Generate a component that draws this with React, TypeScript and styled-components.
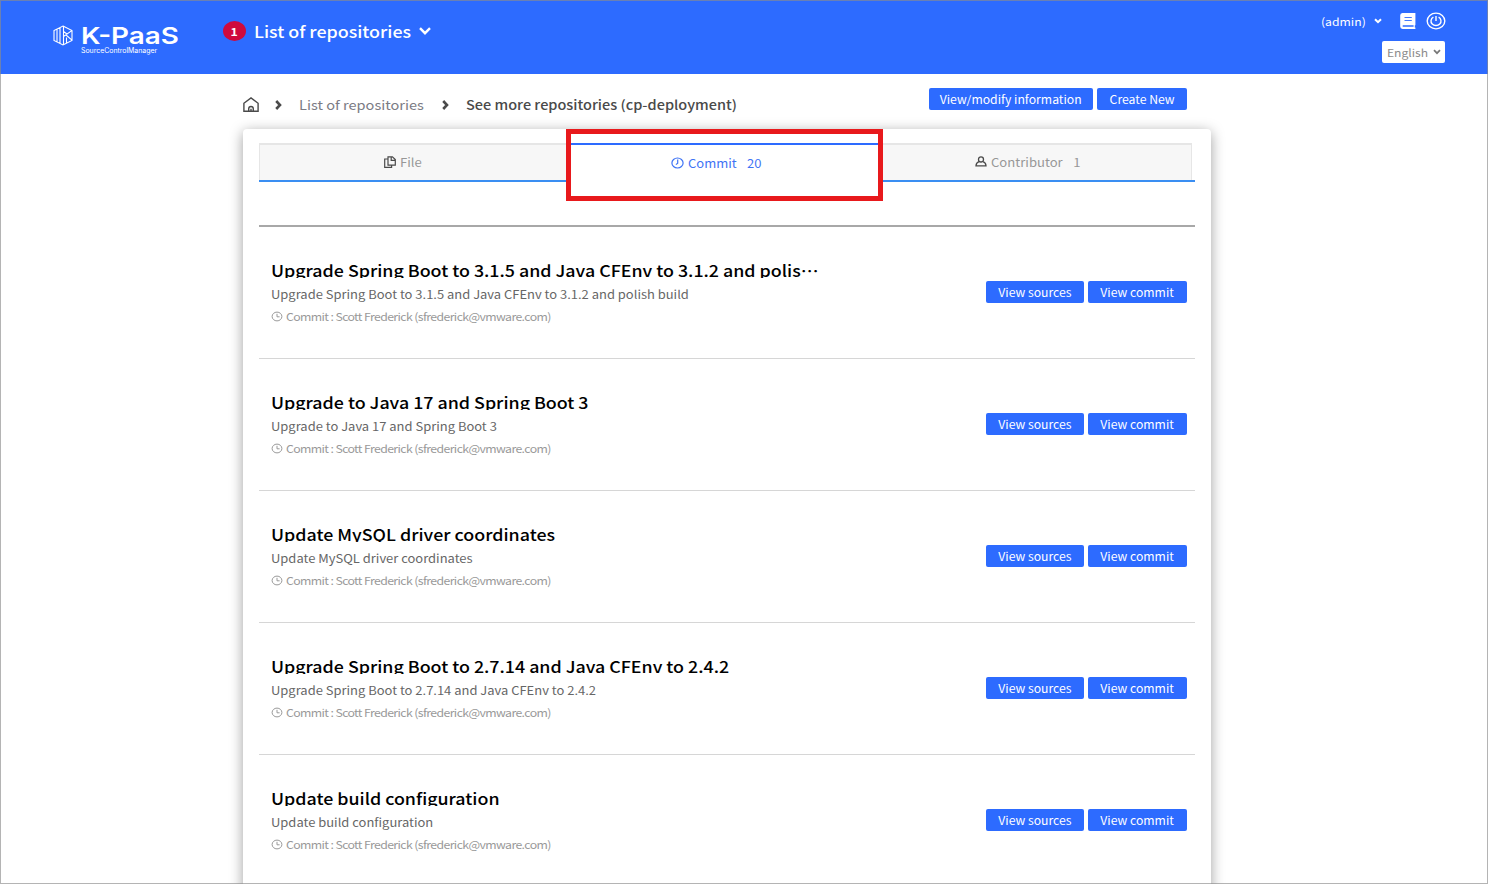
import React from 'react';
import styled, { createGlobalStyle } from 'styled-components';

const Global = createGlobalStyle`
  * { box-sizing: border-box; }
  html, body { margin: 0; padding: 0; }
  body {
    background: #fff;
    font-family: "Noto Sans CJK KR", "Noto Sans", sans-serif;
    overflow: hidden;
  }
  svg { display: block; flex: none; }
`;

const Page = styled.div`
  position: relative;
  width: 1488px;
  height: 884px;
  overflow: hidden;
  background: #fff;
  &::after {
    content: '';
    position: absolute;
    inset: 0;
    border: 1px solid rgba(140, 140, 140, 0.65);
    pointer-events: none;
  }
`;

const Wide = styled.span<{ $k?: number; $center?: boolean; $ls?: number; $ws?: number }>`
  display: inline-block;
  white-space: pre;
  letter-spacing: ${p => p.$ls ?? 0}px;
  word-spacing: ${p => p.$ws ?? 0}px;
  transform: scaleX(${p => p.$k ?? 1.12});
  transform-origin: ${p => (p.$center ? 'center' : 'left')} center;
`;

const Header = styled.header`
  display: flex;
  height: 74px;
  background: #2d6bff;
  color: #fff;
`;

const Logo = styled.div`
  display: flex;
  width: 170px;
  margin-left: 53px;
  padding-top: 25px;
  gap: 8px;
`;

const LogoText = styled.div`
  display: flex;
  flex-direction: column;
  align-items: flex-start;
`;

const Brand = styled.div`
  font: 600 23px/22px Inter, sans-serif;
`;

const Product = styled.div`
  font: 400 7px/7px Inter, sans-serif;
`;

const Nav = styled.nav`
  display: flex;
  align-items: center;
  height: 24px;
  margin-top: 19px;
  width: 240px;
`;

const Badge = styled.span`
  display: flex;
  align-items: center;
  justify-content: center;
  width: 23px;
  height: 20px;
  margin-right: 8px;
  border-radius: 50%;
  background: #cf0a3c;
  font: 700 11px/18px "Noto Sans CJK KR", sans-serif;
`;

const NavLabel = styled.span`
  width: 165px;
  font-size: 16px;
  line-height: 22px;
  font-weight: 500;
`;

const Tools = styled.div`
  display: flex;
  flex-direction: column;
  align-items: flex-end;
  margin-left: auto;
  padding: 12px 42px 0 0;
`;

const UserRow = styled.div`
  display: flex;
  align-items: center;
  height: 18px;
  font-size: 10.9px;
  line-height: 18px;
`;

const UserName = styled.span`
  width: 53px;
  margin-top: -1px;
`;

const UserIcons = styled.div`
  display: flex;
  align-items: center;
  gap: 10px;
  margin-left: 18px;
`;

const Language = styled.div`
  display: flex;
  align-items: center;
  justify-content: space-between;
  width: 63px;
  height: 22px;
  margin: 11px 1px 0 0;
  padding: 0 4px 1px 5px;
  border-radius: 2px;
  background: #fff;
  color: #8c8c8c;
  font-size: 10.8px;
  line-height: 20px;
`;

const TopBar = styled.div`
  display: flex;
  justify-content: space-between;
  width: 944px;
  height: 55px;
  margin-left: 243px;
`;

const Crumbs = styled.div`
  display: flex;
  align-items: center;
  height: 20px;
  margin-top: 21px;
  font-size: 13px;
  line-height: 20px;
`;

const Crumb = styled.span<{ $w: number; $current?: boolean }>`
  width: ${p => p.$w}px;
  font-weight: ${p => (p.$current ? 500 : 400)};
  color: ${p => (p.$current ? '#4a4a4a' : '#7b7b84')};
`;

const Buttons = styled.div`
  display: flex;
  gap: 4px;
`;

const TopButtons = styled(Buttons)`
  margin-top: 14px;
`;

const Button = styled.button<{ $w: number }>`
  display: flex;
  align-items: center;
  justify-content: center;
  width: ${p => p.$w}px;
  height: 22px;
  padding: 0 0 1px;
  border: 0;
  border-radius: 2px;
  background: #2d6bff;
  color: #fff;
  font: 400 11.3px/20px "Noto Sans CJK KR", sans-serif;
`;

const Card = styled.main`
  width: 968px;
  height: 900px;
  margin-left: 243px;
  padding: 14px 16px 0;
  border-radius: 4px 4px 0 0;
  background: #fff;
  box-shadow: 0 3px 14px rgba(0, 0, 0, 0.38);
`;

const Tabs = styled.div`
  display: flex;
  position: relative;
  height: 39px;
  padding-right: 3px;
  border-bottom: 2px solid #3a8ef2;
`;

const Tab = styled.div<{ $active?: boolean }>`
  display: flex;
  flex: 1;
  align-items: center;
  justify-content: center;
  height: ${p => (p.$active ? 42 : 37)}px;
  padding-bottom: ${p => (p.$active ? 5 : 2)}px;
  border: solid ${p => (p.$active ? '#2d6bff' : '#e6e6e6')};
  border-width: 2px 0 0;
  background: ${p => (p.$active ? '#fff' : '#f7f7f7')};
  color: ${p => (p.$active ? '#3f74f5' : '#979797')};
  font-size: 11.7px;
  line-height: 20px;
  &:first-child { border-left-width: 1px; }
  &:nth-child(3) { border-right-width: 1px; }
`;

const TabLabel = styled.span<{ $w: number }>`
  width: ${p => p.$w}px;
  margin-left: 4px;
`;

const Highlight = styled.div`
  position: absolute;
  left: 307px;
  top: -14px;
  width: 317px;
  height: 72px;
  border: 5px solid #e8191c;
`;

const List = styled.ul`
  margin: 43px 0 0;
  padding: 0;
  list-style: none;
  border-top: 2px solid #a8a8a8;
`;

const Item = styled.li`
  display: flex;
  justify-content: space-between;
  height: 132px;
  padding: 35px 8px 0 12px;
  border-bottom: 1px solid #d6d6d6;
`;

const Title = styled.h3`
  height: 16px;
  margin: 0;
  overflow: hidden;
  width: 600px;
  color: #000;
  font-size: 16px;
  line-height: 16px;
  font-weight: 500;
`;

const Ellipsis = styled.span`
  font-family: "Noto Sans CJK JP", sans-serif;
`;

const Description = styled.p`
  margin: 6px 0 0;
  color: #666;
  font-size: 11.6px;
  line-height: 20px;
`;

const Meta = styled.div`
  display: flex;
  align-items: center;
  gap: 3px;
  margin-top: 2px;
  color: #999;
  font-size: 11px;
  line-height: 20px;
`;

const ItemButtons = styled(Buttons)`
  margin-top: 19px;
`;

const Chevron = ({ w, h, sw, dir = 'down', color = 'currentColor' }: { w: number; h: number; sw: number; dir?: string; color?: string }) => (
  <svg width={w} height={h} viewBox={`0 0 ${w} ${h}`} fill="none" stroke={color} strokeWidth={sw}>
    {dir === 'down'
      ? <path d={`M1 1.2 L${w / 2} ${h - 1.8} L${w - 1} 1.2`} />
      : <path d={`M1.2 1 L${w - 2} ${h / 2} L1.2 ${h - 1}`} />}
  </svg>
);

const LogoMark = () => (
  <svg width="20" height="21" viewBox="0 0 20 21" fill="none" stroke="#fff" strokeWidth="1.1">
    <path d="M10 1 19 5.5V15.5L10 20 1 15.5V5.5ZM4 4.2V16.8M7 2.8V18.2M10.5 1V20M10.5 11.5 18.8 5.6M13 10 19 15.2M10.5 6.5 14 9M13.5 12.5V18" />
  </svg>
);

const HomeIcon = () => (
  <svg width="16" height="16" viewBox="0 0 16 16" fill="none" stroke="#4a4a4a" strokeWidth="1.4">
    <path d="M.9 6.3 8 .9l7.1 5.4v8H.9ZM5.7 14.2v-2.4a2.3 2.3 0 0 1 4.6 0v2.4M8 11.8v2.4" />
  </svg>
);

const BookIcon = () => (
  <svg width="16" height="16" viewBox="0 0 16 16">
    <path d="M2.4 0H15.4V12.3H14.8V14.6H15.4V16H2.6A2.4 2.4 0 0 1 .2 13.6V2.4A2.3 2.3 0 0 1 2.4 0Z" fill="#fff" />
    <path d="M4.5 4.5H11.8M4.5 7.5H11.8" stroke="#2d6bff" strokeWidth=".9" />
    <path d="M2.7 13H13.6" stroke="#2d6bff" strokeWidth="1.5" />
  </svg>
);

const PowerIcon = () => (
  <svg width="20" height="18" viewBox="0 0 20 18" fill="none" stroke="#fff" strokeWidth="1.4">
    <ellipse cx="10" cy="9" rx="8.8" ry="7.9" />
    <path d="M7.4 5.2A5 4.5 0 1 0 12.6 5.2M10 4V9" />
  </svg>
);

const FileIcon = () => (
  <svg width="12" height="12" viewBox="0 0 12 12" fill="none" stroke="#4a4a4a" strokeWidth="1.2">
    <path d="M4 3H.7V11.3H7.6V9.2M4 .8H8.4L11.3 3.5V9.2H4ZM7.2 1V4.4H11.2" />
  </svg>
);

const CommitIcon = () => (
  <svg width="13" height="12" viewBox="0 0 13 12" fill="none" stroke="#3f74f5" strokeWidth="1.2">
    <ellipse cx="6.5" cy="6" rx="5.6" ry="5" />
    <path d="M6.7 2.4V6.2L4.9 7.6" />
  </svg>
);

const PersonIcon = () => (
  <svg width="12" height="11" viewBox="0 0 12 11" fill="none" stroke="#4a4a4a" strokeWidth="1.3">
    <ellipse cx="6" cy="3.4" rx="2.5" ry="2.6" />
    <path d="M4 5.7Q1.2 6.7 1 9.8H11Q10.8 6.7 8 5.7" />
  </svg>
);

const ClockIcon = () => (
  <svg width="12" height="11" viewBox="0 0 12 11" fill="none" stroke="#999" strokeWidth="1">
    <ellipse cx="6" cy="5.5" rx="4.9" ry="4.4" />
    <path d="M6 2.8V5.8H8.6" />
  </svg>
);

const commits = [
  { title: 'Upgrade Spring Boot to 3.1.5 and Java CFEnv to 3.1.2 and polis', cut: true, text: 'Upgrade Spring Boot to 3.1.5 and Java CFEnv to 3.1.2 and polish build' },
  { title: 'Upgrade to Java 17 and Spring Boot 3', text: 'Upgrade to Java 17 and Spring Boot 3' },
  { title: 'Update MySQL driver coordinates', text: 'Update MySQL driver coordinates' },
  { title: 'Upgrade Spring Boot to 2.7.14 and Java CFEnv to 2.4.2', text: 'Upgrade Spring Boot to 2.7.14 and Java CFEnv to 2.4.2' },
  { title: 'Update build configuration', text: 'Update build configuration' },
];

export default function App() {
  return (
    <Page>
      <Global />
      <Header>
        <Logo>
          <LogoMark />
          <LogoText>
            <Brand><Wide $k={1.21}>K-PaaS</Wide></Brand>
            <Product><Wide $k={0.99}>SourceControlManager</Wide></Product>
          </LogoText>
        </Logo>
        <Nav>
          <Badge><Wide $center>1</Wide></Badge>
          <NavLabel><Wide $k={1.113}>List of repositories</Wide></NavLabel>
          <Chevron w={12} h={8} sw={2.4} />
        </Nav>
        <Tools>
          <UserRow>
            <UserName><Wide>(admin)</Wide></UserName>
            <Chevron w={8} h={6} sw={2} />
            <UserIcons>
              <BookIcon />
              <PowerIcon />
            </UserIcons>
          </UserRow>
          <Language>
            <Wide>English</Wide>
            <Chevron w={8} h={6} sw={1.7} color="#777" />
          </Language>
        </Tools>
      </Header>
      <TopBar>
        <Crumbs>
          <Crumb $w={32}><HomeIcon /></Crumb>
          <Crumb $w={24}><Chevron w={7} h={10} sw={2.6} dir="right" color="#4a4a4a" /></Crumb>
          <Crumb $w={143}><Wide>List of repositories</Wide></Crumb>
          <Crumb $w={24}><Chevron w={7} h={10} sw={2.6} dir="right" color="#4a4a4a" /></Crumb>
          <Crumb $w={280} $current><Wide $k={1.116}>See more repositories (cp-deployment)</Wide></Crumb>
        </Crumbs>
        <TopButtons>
          <Button $w={164}><Wide $center $k={1.08}>View/modify information</Wide></Button>
          <Button $w={90}><Wide $center $k={1.08}>Create New</Wide></Button>
        </TopButtons>
      </TopBar>
      <Card>
        <Tabs>
          <Tab><FileIcon /><TabLabel $w={46}><Wide>File</Wide></TabLabel></Tab>
          <Tab $active><CommitIcon /><TabLabel $w={91}><Wide $ws={0.5} $k={1.11}>Commit   20</Wide></TabLabel></Tab>
          <Tab><PersonIcon /><TabLabel $w={106}><Wide $ws={0.5}>Contributor   1</Wide></TabLabel></Tab>
          <Highlight />
        </Tabs>
        <List>
          {commits.map(c => (
            <Item key={c.title}>
              <div>
                <Title><Wide $k={1.113}>{c.title}{c.cut && <Ellipsis lang="ja">…</Ellipsis>}</Wide></Title>
                <Description><Wide $k={1.117}>{c.text}</Wide></Description>
                <Meta><ClockIcon /><Wide $ls={-0.54} $k={1.115}>Commit : Scott Frederick (sfrederick@vmware.com)</Wide></Meta>
              </div>
              <ItemButtons>
                <Button $w={98}><Wide $center $k={1.08}>View sources</Wide></Button>
                <Button $w={99}><Wide $center $k={1.08}>View commit</Wide></Button>
              </ItemButtons>
            </Item>
          ))}
        </List>
      </Card>
    </Page>
  );
}
